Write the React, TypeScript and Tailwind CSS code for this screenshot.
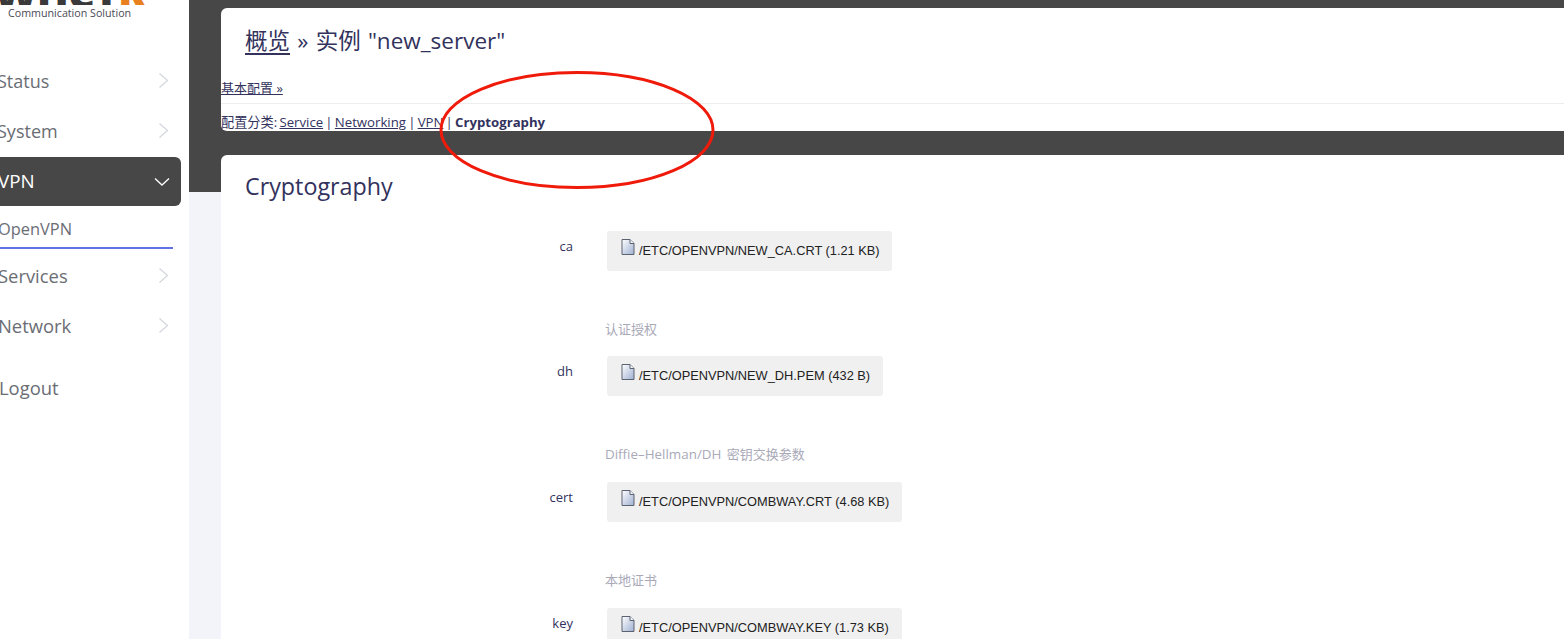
import React from "react";

const Chevron = () => (
  <svg width="12" height="18" viewBox="0 0 12 18" fill="none" className="shrink-0">
    <path d="M1.5 1.5L9.5 8.5L1.5 15.5" stroke="#d5d8de" strokeWidth="1.3" />
  </svg>
);

const ChevronDown = () => (
  <svg width="16" height="10" viewBox="0 0 16 10" fill="none" className="shrink-0">
    <path d="M1 1.5L8 8L15 1.5" stroke="#ffffff" strokeWidth="1.3" />
  </svg>
);

const FileIcon = () => (
  <svg width="14" height="16" viewBox="0 0 14 16" className="shrink-0">
    <defs>
      <linearGradient id="fg" x1="0" y1="0" x2="1" y2="1">
        <stop offset="0" stopColor="#ffffff" />
        <stop offset="1" stopColor="#9fb0d2" />
      </linearGradient>
    </defs>
    <path d="M1 .5H9L13 4.5V15.5H1Z" fill="url(#fg)" stroke="#5c6370" strokeWidth="1" />
    <path d="M9 .5V4.5H13" fill="#f4f6fa" stroke="#5c6370" strokeWidth="1" />
  </svg>
);

const NavItem = ({ label, cls }: { label: string; cls: string }) => (
  <div className="flex h-[50px] items-center justify-between pr-[19px] text-[#6a6d74]">
    <span className={cls}>{label}</span>
    <Chevron />
  </div>
);

const FileRow = ({
  label,
  file,
  help,
  width,
}: {
  label: string;
  file: string;
  help: React.ReactNode;
  width: string;
}) => (
  <div className="flex h-[125.7px] items-start">
    <div className="w-[352px] pt-[6px] text-right text-[13px] leading-[18px] text-[#32325d]">{label}</div>
    <div className="ml-[34px] flex flex-col">
      <div className={`flex h-[40px] items-start rounded-[3px] bg-[#f0f0f0] pl-[14px] pt-[8px] ${width}`}>
        <FileIcon />
        <span className="ml-[4px] pt-[4px] font-['Liberation_Sans'] text-[12.8px] leading-[16px] whitespace-nowrap text-[#222222]">{file}</span>
      </div>
      <div className="-ml-[2px] mt-[48px] text-[13px] leading-[20px] whitespace-nowrap text-[#a9a9b8]">{help}</div>
    </div>
  </div>
);

export default function App() {
  return (
    <div className="relative flex h-[639px] w-[1564px] overflow-hidden bg-[#f3f4f9] font-['Open_Sans','Noto_Sans_CJK_SC',sans-serif]">
      <aside className="w-[189px] shrink-0 bg-white">
        <div className="relative h-[56px] overflow-hidden">
          <div className="flex h-[5px] items-end overflow-hidden">
            <span className="-mb-[9px] -ml-[6px] text-[42px] leading-[42px] font-extrabold tracking-[-1px] whitespace-nowrap text-[#3a3a3a]">
              WHCT<span className="text-[#e8801e]">K</span>
            </span>
          </div>
          <div className="mt-[1px] pl-[8px] text-[10.7px] leading-[14px] text-[#4a4a55]">Communication Solution</div>
        </div>
        <nav className="flex flex-col text-[18px]">
          <NavItem label="Status" cls="-ml-[3px]" />
          <NavItem label="System" cls="-ml-[3px]" />
          <div className="mt-[1px] flex h-[49px] w-[181px] items-center justify-between rounded-r-[6px] bg-[#474747] pr-[11px] text-white">
            <span className="-ml-[2px] text-[18.8px]">VPN</span>
            <ChevronDown />
          </div>
          <div className="mt-[7px] flex h-[36px] w-[173px] items-start border-b-2 border-[#5e72e4] pt-[4px] text-[16.4px] leading-[24px] text-[#6a6d74]">
            <span className="-ml-[2px]">OpenVPN</span>
          </div>
          <div className="mt-[2px] flex flex-col">
            <NavItem label="Services" cls="-ml-[2px] text-[18.4px]" />
            <NavItem label="Network" cls="-ml-[2px] text-[18.4px]" />
          </div>
          <div className="mt-[12px] flex h-[50px] items-center text-[#6a6d74]">
            <span className="-ml-[1px] text-[18.4px]">Logout</span>
          </div>
        </nav>
      </aside>

      <main className="relative min-w-0 flex-1">
        <div className="h-[192px] bg-[#474747]" />
        <div className="absolute inset-x-0 top-0 pl-[32px]">
          <section className="mt-[8px] h-[123px] overflow-hidden rounded-l-[6px] bg-white">
            <h1 className="pl-[24px] pt-[15px] text-[22.5px] leading-[36px] [word-spacing:1.4px] text-[#32325d]">
              <span className="underline underline-offset-[4px]">概览</span> » 实例 "new_server"
            </h1>
            <div className="mt-[19px] h-[26px] border-b border-[#eeeeee] text-[13px] leading-[20px] text-[#32325d]">
              <span className="underline">基本配置 »</span>
            </div>
            <div className="pt-[9px] text-[13.2px] leading-[18px] [word-spacing:-1.2px] text-[#32325d]">
              配置分类: <span className="underline">Service</span> | <span className="underline">Networking</span> |{" "}
              <span className="underline">VPN</span> | <strong className="font-bold">Cryptography</strong>
            </div>
          </section>
          <section className="mt-[24px] h-[500px] rounded-tl-[6px] bg-white">
            <h2 className="pl-[24px] pt-[13px] text-[23.3px] leading-[36px] text-[#32325d]">Cryptography</h2>
            <div className="mt-[26.5px]">
              <FileRow label="ca" file="/ETC/OPENVPN/NEW_CA.CRT (1.21 KB)" help="认证授权" width="w-[285px]" />
              <FileRow
                label="dh"
                file="/ETC/OPENVPN/NEW_DH.PEM (432 B)"
                help={
                  <>
                    <span className="mr-[2px] text-[13.4px]">Diffie–Hellman/DH</span> 密钥交换参数
                  </>
                }
                width="w-[276px]"
              />
              <FileRow label="cert" file="/ETC/OPENVPN/COMBWAY.CRT (4.68 KB)" help="本地证书" width="w-[295px]" />
              <FileRow label="key" file="/ETC/OPENVPN/COMBWAY.KEY (1.73 KB)" help="" width="w-[295px]" />
            </div>
          </section>
        </div>
      </main>

      <svg className="pointer-events-none absolute left-[438px] top-[70px]" width="280" height="120" viewBox="0 0 280 120" fill="none">
        <ellipse cx="139" cy="60" rx="136" ry="57.5" stroke="#f01a0a" strokeWidth="3" />
      </svg>
    </div>
  );
}
